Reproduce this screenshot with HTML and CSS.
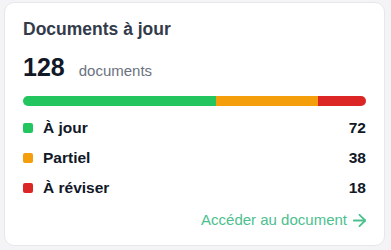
FILE: index.html
```html
<!DOCTYPE html>
<html lang="fr">
<head>
    <meta charset="UTF-8">
    <meta name="viewport" content="width=device-width, initial-scale=1.0">
    <title>Documents à jour</title>
    <link rel="stylesheet" href="styles.css">
</head>
<body>
    <div class="page">
        <div class="card">
            <h2 class="card-title">Documents à jour</h2>

            <div class="total">
                <span class="total-value">128</span>
                <span class="total-label">documents</span>
            </div>

            <div class="bar">
                <div class="bar-part green" style="width: 56.25%;"></div>
                <div class="bar-part orange" style="width: 29.69%;"></div>
                <div class="bar-part red" style="width: 14.06%;"></div>
            </div>

            <ul class="legend">
                <li class="legend-row">
                    <span class="dot green"></span>
                    <span class="legend-name">À jour</span>
                    <span class="legend-count">72</span>
                </li>
                <li class="legend-row">
                    <span class="dot orange"></span>
                    <span class="legend-name">Partiel</span>
                    <span class="legend-count">38</span>
                </li>
                <li class="legend-row">
                    <span class="dot red"></span>
                    <span class="legend-name">À réviser</span>
                    <span class="legend-count">18</span>
                </li>
            </ul>

            <div class="card-footer">
                <a class="link" href="#">
                    Accéder au document
                    <svg width="13" height="13" viewBox="4 4 16 16" fill="none" stroke="currentColor" stroke-width="2.2" stroke-linecap="round" stroke-linejoin="round">
                        <path d="M5 12h14"></path>
                        <path d="M12 5l7 7-7 7"></path>
                    </svg>
                </a>
            </div>
        </div>
    </div>
</body>
</html>
```

FILE: styles.css
```css
/* Page background */
html, body {
    margin: 0;
    height: 100%;
}

body {
    font-family: "Liberation Sans", Arial, sans-serif;
    background-color: #f4f4f6;
}

.page {
    padding: 2px 6px 5px 4px;
}

/* Card */
.card {
    background-color: #ffffff;
    border: 1px solid #e6e7eb;
    border-radius: 10px;
    padding: 14px 18px 15px 18px;
    display: flex;
    flex-direction: column;
}

.card-title {
    margin: 0;
    font-size: 17.5px;
    line-height: 24px;
    font-weight: bold;
    color: #333b4a;
}

.total {
    margin-top: 11px;
    display: flex;
    align-items: baseline;
    gap: 14px;
    line-height: 30px;
}

.total-value {
    font-size: 25px;
    font-weight: bold;
    color: #111827;
}

.total-label {
    font-size: 15px;
    color: #6b7280;
}

/* Stacked bar */
.bar {
    margin-top: 10px;
    height: 10px;
    border-radius: 5px;
    overflow: hidden;
    display: flex;
}

.bar-part {
    height: 100%;
}

.green { background-color: #22c55e; }
.orange { background-color: #f59e0b; }
.red { background-color: #dc2626; }

/* Legend */
.legend {
    list-style: none;
    margin: 11px 0 0 0;
    padding: 0;
    display: flex;
    flex-direction: column;
    gap: 8px;
}

.legend-row {
    display: flex;
    align-items: center;
    height: 22px;
    font-size: 15.5px;
    font-weight: bold;
    color: #111827;
}

.dot {
    width: 10px;
    height: 10px;
    border-radius: 2px;
    margin-right: 10px;
}

.legend-name {
    flex: 1;
}

/* Footer link */
.card-footer {
    margin-top: 11px;
    display: flex;
    justify-content: flex-end;
}

.link {
    display: flex;
    align-items: center;
    gap: 6px;
    font-size: 15px;
    line-height: 20px;
    color: #4cc08e;
    text-decoration: none;
}
```
